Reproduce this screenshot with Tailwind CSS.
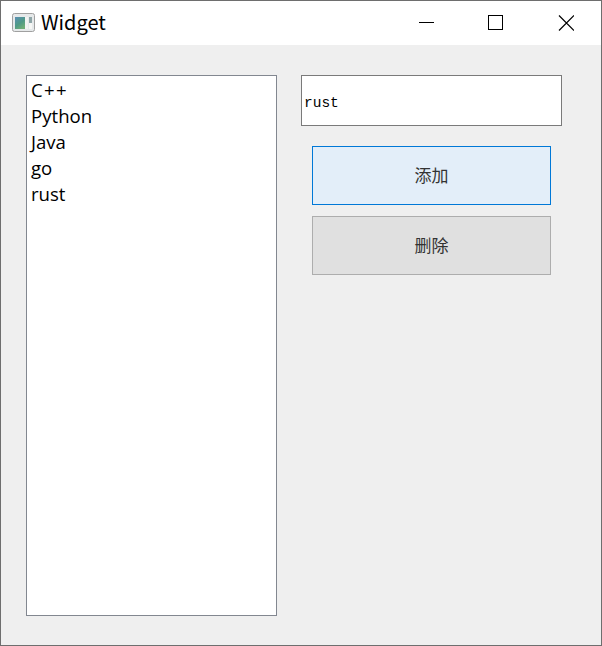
<!DOCTYPE html>
<html lang="en">
<head>
  <meta charset="UTF-8">
  <title>Widget</title>
  <script src="https://cdn.jsdelivr.net/npm/@tailwindcss/browser@4"></script>
</head>
<body class="bg-[#efefef]">
  <div class="w-[602px] h-[646px] flex flex-col border border-[#6e6e6e] overflow-hidden font-['Noto_Sans_CJK_SC',sans-serif]">
    <!-- title bar -->
    <div class="h-[44px] shrink-0 bg-white flex items-center text-black">
      <svg class="ml-[11px] w-[23px] h-[19px] -mt-[2px]" viewBox="0 0 23 19">
        <defs>
          <linearGradient id="pane" x1="0" y1="0" x2="0.6" y2="1">
            <stop offset="0" stop-color="#5b8fb5"/>
            <stop offset="0.6" stop-color="#4f9a86"/>
            <stop offset="1" stop-color="#6fae78"/>
          </linearGradient>
        </defs>
        <rect x="0.5" y="0.5" width="22" height="18" rx="2" fill="#e6e9ea" stroke="#a0a0a0"/>
        <rect x="3" y="4" width="10" height="12" fill="url(#pane)"/>
        <rect x="13" y="4" width="3" height="12" fill="#f2f4f2"/>
        <rect x="17" y="4" width="3" height="6" fill="#8fa6a8"/>
        <rect x="17" y="10" width="3" height="6" fill="#f6f7f5"/>
      </svg>
      <span class="ml-[6px] text-[20px] leading-none -mt-[2px]">Widget</span>
      <div class="ml-auto flex items-center">
        <div class="w-[70px] h-[44px] flex items-center justify-center">
          <svg class="w-[16px] h-[16px]" viewBox="0 0 16 16"><path d="M1 7.5H16" stroke="#000" stroke-width="1"/></svg>
        </div>
        <div class="w-[70px] h-[44px] flex items-center justify-center">
          <svg class="w-[16px] h-[16px]" viewBox="0 0 16 16"><rect x="0.5" y="0.5" width="14" height="14" fill="none" stroke="#000"/></svg>
        </div>
        <div class="w-[70px] h-[44px] flex items-center justify-center">
          <svg class="w-[16px] h-[16px]" viewBox="0 0 16 16"><path d="M1 0.5L16 15.5M16 0.5L1 15.5" stroke="#000" stroke-width="1.2"/></svg>
        </div>
      </div>
    </div>

    <!-- client area -->
    <div class="flex-1 flex pt-[30px] pl-[25px] items-start">
      <ul class="w-[251px] h-[541px] bg-white border border-[#828790] pl-[4px] pt-[1px] text-[18.6px] leading-[26px] text-black font-['Open_Sans']">
        <li class="tracking-[1.3px]">C++</li>
        <li>Python</li>
        <li>Java</li>
        <li>go</li>
        <li>rust</li>
      </ul>
      <div class="ml-[24px] w-[261px] flex flex-col">
        <div class="h-[51px] bg-white border border-[#7a7a7a] flex items-center pl-[2px] pt-[6px] font-['Liberation_Mono'] text-[14.5px] font-medium text-black">rust</div>
        <div class="mt-[20px] ml-[11px] w-[239px] h-[59px] bg-[#e3eef9] border border-[#0078d7] flex items-center justify-center pb-[2px] text-[17px] text-[#333]">添加</div>
        <div class="mt-[11px] ml-[11px] w-[239px] h-[59px] bg-[#e0e0e0] border border-[#adadad] flex items-center justify-center pb-[2px] text-[17px] text-[#333]">删除</div>
      </div>
    </div>
  </div>
</body>
</html>
